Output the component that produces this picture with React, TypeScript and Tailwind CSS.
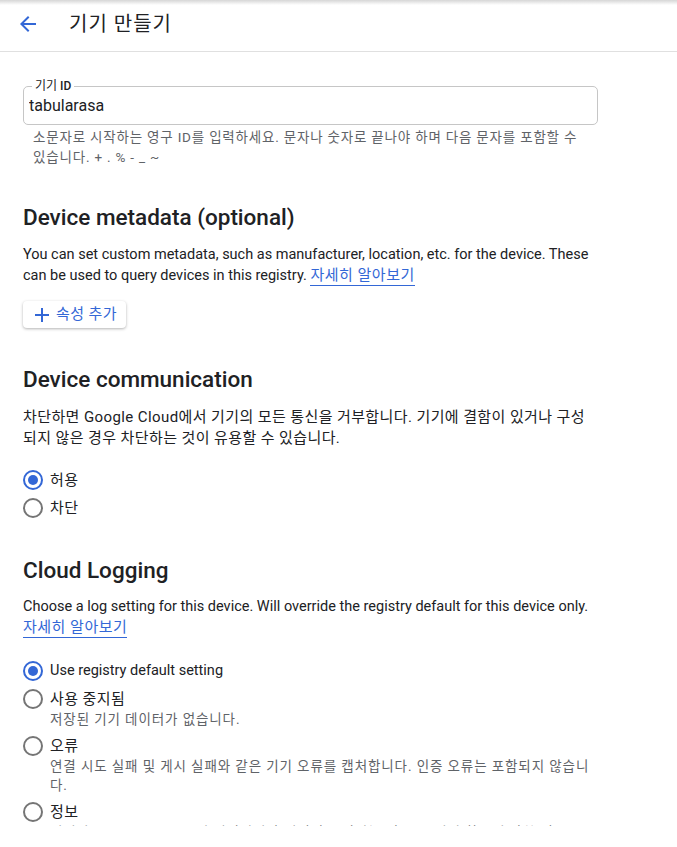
import React, { useState } from 'react';

const FONT = "font-['Roboto','Noto_Sans_CJK_KR',sans-serif]";
const HANGUL = /[가-힣]/;

type Option = { id: string; label: string; desc?: string };

function Radio({ checked }: { checked: boolean }) {
  return (
    <span
      className={`mt-[1px] flex h-[20px] w-[20px] shrink-0 items-center justify-center rounded-full border-2 ${
        checked ? 'border-[#3367d6]' : 'border-[#757575]'
      }`}
    >
      {checked && <span className="h-[10px] w-[10px] rounded-full bg-[#3367d6]" />}
    </span>
  );
}

function RadioGroup({ options, value, onChange, gap }: { options: Option[]; value: string; onChange: (v: string) => void; gap: string }) {
  return (
    <div className={`flex flex-col ${gap}`}>
      {options.map((o) => (
        <div key={o.id} className="flex cursor-pointer items-start gap-[7px]" onClick={() => onChange(o.id)}>
          <Radio checked={value === o.id} />
          <div className="flex flex-col">
            <span
              className={
                HANGUL.test(o.label)
                  ? 'text-[15px] leading-[22px] tracking-[0.4px] text-[#202124]'
                  : 'text-[14.5px] leading-[22px] text-[#202124]'
              }
            >
              {o.label}
            </span>
            {o.desc && (
              <span className="pr-[4px] text-[13.5px] leading-[19px] tracking-[0.9px] text-[#5f6368]">{o.desc}</span>
            )}
          </div>
        </div>
      ))}
    </div>
  );
}

function LearnMore() {
  return (
    <a href="#" className="inline-block border-b border-[#3367d6] text-[15px] leading-[19px] tracking-[0.5px] text-[#3367d6]">
      자세히 알아보기
    </a>
  );
}

export default function App() {
  const [deviceId, setDeviceId] = useState('tabularasa');
  const [comm, setComm] = useState('allow');
  const [log, setLog] = useState('default');

  const logOptions: Option[] = [
    { id: 'default', label: 'Use registry default setting' },
    { id: 'none', label: '사용 중지됨', desc: '저장된 기기 데이터가 없습니다.' },
    { id: 'error', label: '오류', desc: '연결 시도 실패 및 게시 실패와 같은 기기 오류를 캡처합니다. 인증 오류는 포함되지 않습니다.' },
    { id: 'info', label: '정보', desc: '기기가 Cloud IoT Core에 연결되거나 연결이 끊어지는 경우 등 기기 활동에 관한 정보 로그를 캡처합니다.' },
  ];

  return (
    <div className={`h-[847px] overflow-hidden bg-white ${FONT}`}>
      <div className="flex h-[52px] items-center border-b border-[#e0e0e0] bg-[linear-gradient(to_bottom,#d6d6d6_0px,#ffffff_5px)] pb-[4px]">
        <button className="ml-[16px] flex h-[24px] w-[24px] items-center justify-center">
          <svg viewBox="0 0 24 24" width="24" height="24" fill="#3367d6">
            <path d="M20 11H7.83l5.59-5.59L12 4l-8 8 8 8 1.41-1.41L7.83 13H20v-2z" />
          </svg>
        </button>
        <h1 className="ml-[29px] text-[20px] leading-[24px] tracking-[1px] text-[#202124]">기기 만들기</h1>
      </div>

      <div className="h-[774px] overflow-hidden">
        <div className="w-[598px] pl-[23px]">
          <div className="relative mt-[34px] h-[39px] rounded-[5px] border border-[#c6c6c6]">
            <span className="absolute left-[8px] top-[-9px] bg-white px-[3px] text-[12px] leading-[16px] text-[#202124]">
              기기 <span className="font-medium">ID</span>
            </span>
            <input
              value={deviceId}
              onChange={(e) => setDeviceId(e.target.value)}
              className="h-full w-full bg-transparent px-[5px] text-[16px] text-[#202124] outline-none"
            />
          </div>
          <p className="mt-[2px] pl-[10px] pr-[12px] text-[13.5px] leading-[20px] tracking-[0.8px] text-[#5f6368]">
            소문자로 시작하는 영구 ID를 입력하세요. 문자나 숫자로 끝나야 하며 다음 문자를 포함할 수 있습니다. + . % - _ ~
          </p>

          <h2 className="mt-[36px] text-[22.5px] font-medium leading-[28px] text-[#202124]">Device metadata (optional)</h2>
          <p className="mt-[13px] text-[14.5px] leading-[21px] text-[#202124]">
            You can set custom metadata, such as manufacturer, location, etc. for the device. These can be used to query devices in this registry.{' '}
            <LearnMore />
          </p>
          <button className="mt-[15px] flex h-[27px] items-center gap-[7px] rounded-[4px] bg-white pl-[12px] pr-[9px] text-[15px] tracking-[0.4px] text-[#3367d6] shadow-[0_1px_3px_rgba(0,0,0,0.3)]">
            <svg viewBox="0 0 14 14" width="14" height="14" stroke="#3367d6" strokeWidth="2">
              <path d="M7 0v14M0 7h14" />
            </svg>
            속성 추가
          </button>

          <h2 className="mt-[37px] text-[22.5px] font-medium leading-[28px] text-[#202124]">Device communication</h2>
          <p className="mt-[14px] text-[15px] leading-[21px] tracking-[0.4px] text-[#202124]">
            차단하면 Google Cloud에서 기기의 모든 통신을 거부합니다. 기기에 결함이 있거나 구성되지 않은 경우 차단하는 것이 유용할 수 있습니다.
          </p>
          <div className="mt-[20px]">
            <RadioGroup
              gap="gap-[6px]"
              value={comm}
              onChange={setComm}
              options={[
                { id: 'allow', label: '허용' },
                { id: 'block', label: '차단' },
              ]}
            />
          </div>

          <h2 className="mt-[37px] text-[22.5px] font-medium leading-[28px] text-[#202124]">Cloud Logging</h2>
          <p className="mt-[12px] text-[14.5px] leading-[21px] text-[#202124]">
            Choose a log setting for this device. Will override the registry default for this device only.{' '}
            <LearnMore />
          </p>
          <div className="mt-[22px]">
            <RadioGroup gap="gap-[6px]" value={log} onChange={setLog} options={logOptions} />
          </div>
        </div>
      </div>
    </div>
  );
}
